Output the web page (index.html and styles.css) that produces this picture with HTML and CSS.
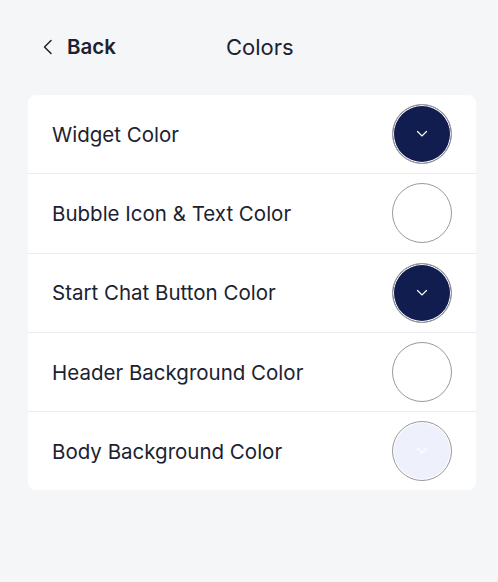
FILE: index.html
```html
<!DOCTYPE html>
<html lang="en">
<head>
    <meta charset="UTF-8">
    <title>Colors</title>
    <link rel="stylesheet" href="styles.css">
</head>
<body>
    <!--顶部导航-->
    <div class="topbar">
        <a class="back" href="javascript:;">
            <svg width="10" height="16" viewBox="0 0 10 16"><path d="M8 1.5 1.5 8 8 14.5" fill="none" stroke="#1c2230" stroke-width="1.5" stroke-linecap="round" stroke-linejoin="round"/></svg>
            <span>Back</span>
        </a>
        <div class="title">Colors</div>
    </div>
    <!--颜色列表-->
    <ul class="card">
        <li class="row">
            <span>Widget Color</span>
            <span class="swatch dark"><svg width="12" height="8" viewBox="0 0 12 8"><path d="M1.5 1.5 6 6 10.5 1.5" fill="none" stroke="#fff" stroke-width="1.2" stroke-linecap="round"/></svg></span>
        </li>
        <li class="row">
            <span>Bubble Icon &amp; Text Color</span>
            <span class="swatch"></span>
        </li>
        <li class="row">
            <span>Start Chat Button Color</span>
            <span class="swatch dark"><svg width="12" height="8" viewBox="0 0 12 8"><path d="M1.5 1.5 6 6 10.5 1.5" fill="none" stroke="#fff" stroke-width="1.2" stroke-linecap="round"/></svg></span>
        </li>
        <li class="row">
            <span>Header Background Color</span>
            <span class="swatch"></span>
        </li>
        <li class="row">
            <span>Body Background Color</span>
            <span class="swatch light"><svg width="12" height="8" viewBox="0 0 12 8"><path d="M1.5 1.5 6 6 10.5 1.5" fill="none" stroke="#fff" stroke-width="1.2" stroke-linecap="round"/></svg></span>
        </li>
    </ul>
</body>
</html>
```
FILE: styles.css
```css
*{
    margin: 0;
    padding: 0;
}
body{
    background-color: #f5f6f8;
    font-family: Inter, "Noto Sans", sans-serif;
    color: #1c2230;
    padding: 0 22px 0 28px;
}
.topbar{
    height: 95px;
    display: flex;
    align-items: center;
    padding-bottom: 2px;
    box-sizing: border-box;
}
.back{
    display: flex;
    align-items: center;
    gap: 14px;
    padding-left: 15px;
    font-size: 20.5px;
    font-weight: 600;
    color: #1c2230;
    text-decoration: none;
    width: 183px;
}
.title{
    font-size: 22px;
    font-weight: 400;
}
.card{
    list-style: none;
    background-color: #fff;
    border-radius: 8px;
    overflow: hidden;
}
.row{
    height: 78.3px;
    display: flex;
    align-items: center;
    justify-content: space-between;
    padding: 0 24px;
    font-size: 20.5px;
    border-top: 1px solid #ebebf2;
}
.row:first-child{
    border-top: none;
}
.swatch{
    width: 58px;
    height: 58px;
    border-radius: 50%;
    border: 1px solid #9a9a9a;
    box-shadow: inset 0 0 0 1px #fff;
    background-color: #fff;
    display: flex;
    align-items: center;
    justify-content: center;
}
.swatch.dark{
    background-color: #111d4f;
}
.swatch.light{
    background-color: #eef1fc;
}
```
